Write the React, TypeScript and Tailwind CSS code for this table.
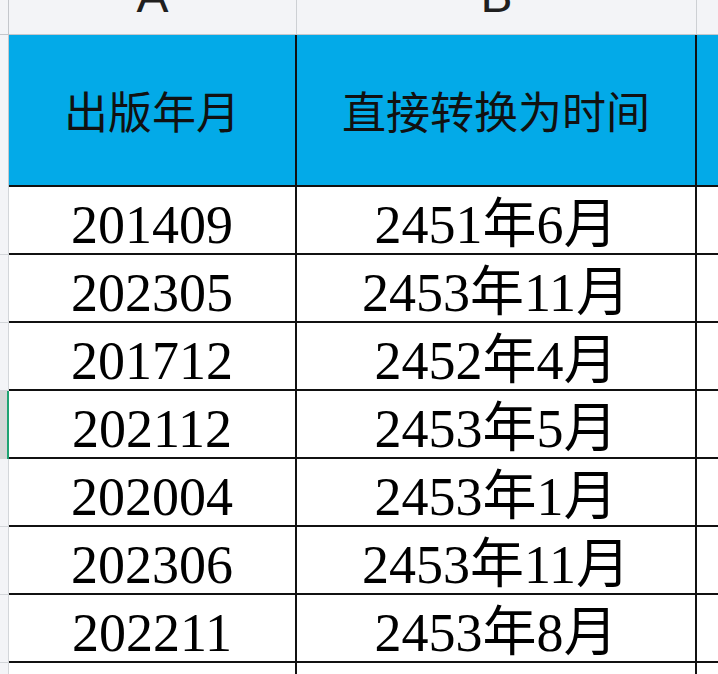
const rows = [
  { code: '201409', date: '2451年6月' },
  { code: '202305', date: '2453年11月' },
  { code: '201712', date: '2452年4月' },
  { code: '202112', date: '2453年5月' },
  { code: '202004', date: '2453年1月' },
  { code: '202306', date: '2453年11月' },
  { code: '202211', date: '2453年8月' },
  { code: '', date: '' },
]

const serif = { fontFamily: '"Liberation Serif", "Noto Sans CJK SC", serif' }

export default function App() {
  return (
    <div className="w-[718px] h-[674px] overflow-hidden bg-white flex flex-col">
      {/* column letters */}
      <div className="flex h-[35px] shrink-0 border-b border-[#c4c7cc] bg-[#f3f4f7] overflow-hidden font-['Liberation_Sans',sans-serif] text-[#1f1f1f]">
        <div className="w-[9px] shrink-0 border-r border-[#c4c7cc]" />
        <div className="w-[288px] shrink-0 border-r border-[#cdd0d4] flex justify-center">
          <span className="-mt-[28px] text-[48px] leading-none">A</span>
        </div>
        <div className="w-[400px] shrink-0 border-r border-[#cdd0d4] flex justify-center">
          <span className="-mt-[28px] text-[48px] leading-none">B</span>
        </div>
        <div className="flex-1" />
      </div>

      {/* header row */}
      <div className="flex h-[152px] shrink-0 font-['Noto_Sans_CJK_SC',sans-serif] text-[44px] leading-none text-[#111]">
        <div className="w-[9px] shrink-0 bg-[#f3f4f7] border-r border-[#c4c7cc]" />
        <div className="w-[288px] shrink-0 bg-[#03aae8] border-r-2 border-b-2 border-[#111] flex items-center justify-center">
          出版年月
        </div>
        <div className="w-[400px] shrink-0 bg-[#03aae8] border-r-2 border-b-2 border-[#111] flex items-center justify-center">
          直接转换为时间
        </div>
        <div className="flex-1 bg-[#03aae8] border-b-2 border-[#111]" />
      </div>

      {/* data rows */}
      {rows.map((r, i) => (
        <div key={i} className="flex h-[68px] shrink-0 text-[54px] leading-none text-black" style={serif}>
          <div
            className={
              i === 3
                ? 'w-[9px] shrink-0 bg-[#d4d7d6] border-r-2 border-[#1fa371]'
                : 'w-[9px] shrink-0 bg-[#f3f4f7] border-r border-b border-[#d3d6da]'
            }
          />
          <div className="w-[288px] shrink-0 border-r-2 border-b-2 border-[#111] flex items-center justify-center pt-[10px]">
            {r.code}
          </div>
          <div className="w-[400px] shrink-0 border-r-2 border-b-2 border-[#111] flex items-center justify-center pt-[10px]">
            {r.date}
          </div>
          <div className="flex-1 border-b-2 border-[#111]" />
        </div>
      ))}
    </div>
  )
}
